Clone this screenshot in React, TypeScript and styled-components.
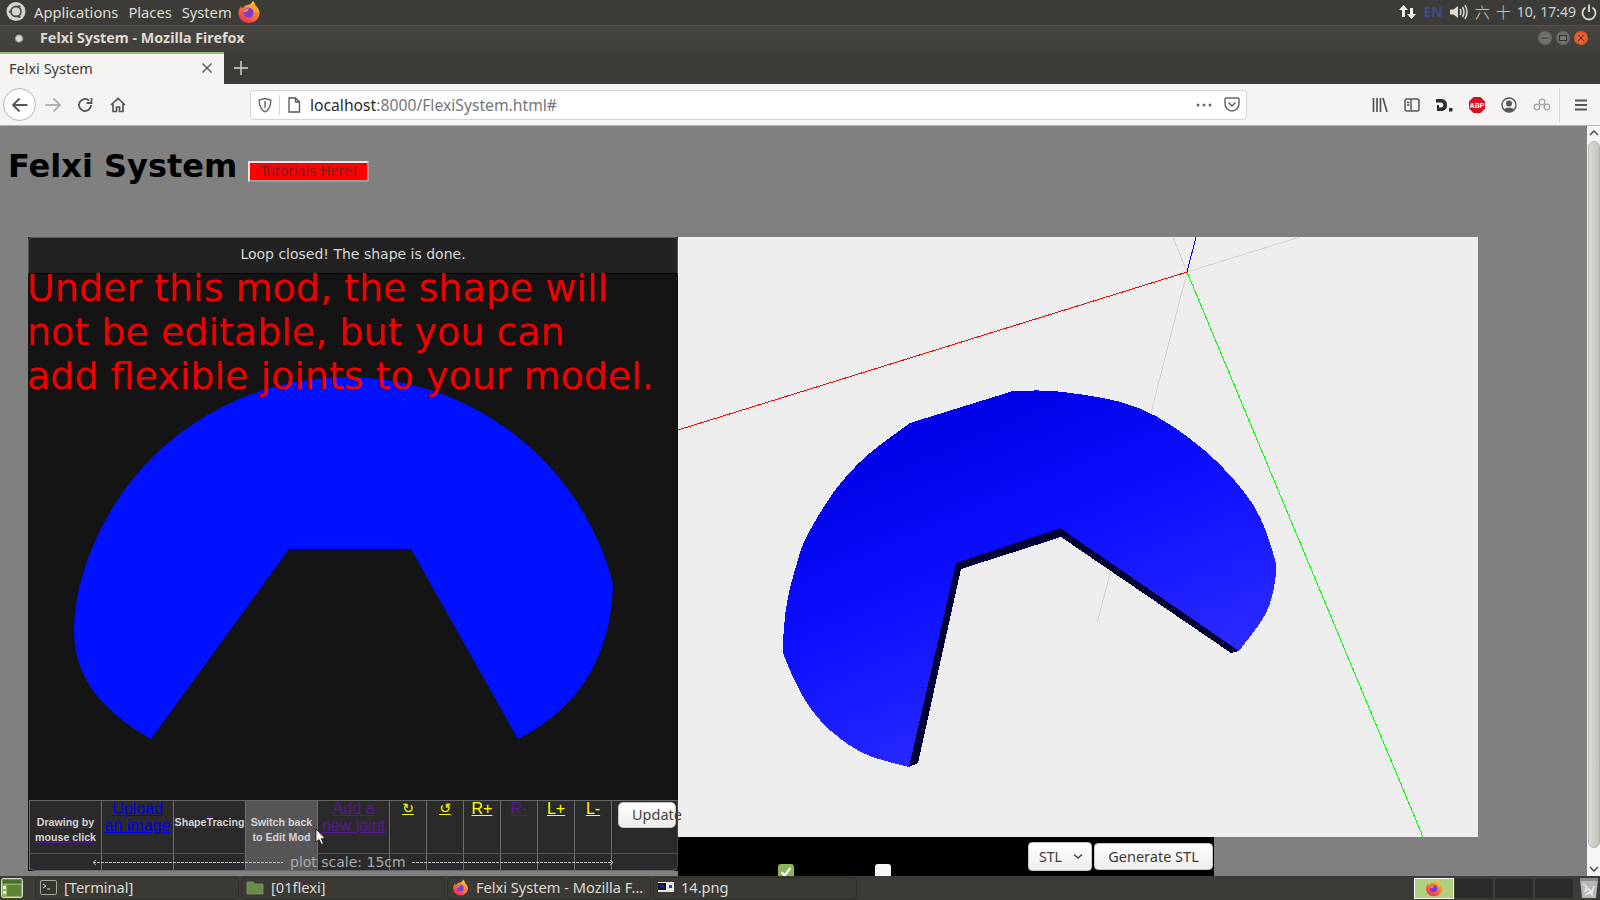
import React from 'react';
import styled, { createGlobalStyle } from 'styled-components';

const UI_FONT = '"Noto Sans", "Open Sans", sans-serif';
const PAGE_FONT = '"DejaVu Sans", sans-serif';

const GlobalStyle = createGlobalStyle`
html, body {
  margin: 0;
  padding: 0;
  background: #3c3b37;
  overflow: hidden;
}
`;

/* desktop chrome */
const Desktop = styled.div`
    width: 1600px;
    height: 900px;
    display: flex;
    flex-direction: column;
    overflow: hidden;
    font-family: ${UI_FONT};
`;
const TopPanel = styled.div`
    height: 23px;
    flex: none;
    display: flex;
    align-items: center;
    background: #3c3b37;
    border-bottom: 1px solid #53524d;
    color: #dfdbd2;
    font-size: 14.7px;
    padding: 0 2px 2px 5px;
`;
const MenuLabel = styled.span`
    margin-right: 10px;
    white-space: nowrap;
`;
const MenuLogo = styled.div`
    width: 23px;
    height: 23px;
    margin-right: 6px;
    display: flex;
`;
const BrowserLauncher = styled.div`
    margin-left: -5px;
    display: flex;
`;
const Tray = styled.div`
    margin-left: auto;
    display: flex;
    align-items: center;
    color: #c6d3dc;
    font-size: 14px;
    white-space: nowrap;
`;
const TrayEn = styled.span`
    color: #3c4c8f;
    font-weight: 700;
    margin: 0 6px 0 7px;
    font-size: 14px;
`;
const TrayCjk = styled.span<{ $left: number; $right: number }>`
    font-family: 'Noto Sans CJK SC', sans-serif;
    font-weight: 300;
    font-size: 15px;
    margin: 0 ${(p) => p.$right}px 0 ${(p) => p.$left}px;
`;
const TitleBar = styled.div`
    height: 26px;
    flex: none;
    box-sizing: border-box;
    display: flex;
    align-items: center;
    background: linear-gradient(#474641, #3f3e3a);
    color: #dfdbd2;
    font-size: 14.3px;
    font-weight: 700;
    padding: 0 10px 3px 14px;
`;
const TitleDot = styled.div`
    width: 10px;
    height: 10px;
    margin-right: 16px;
    border-radius: 50%;
    background: radial-gradient(circle at 50% 55%, #d8d8d4 0 35%, #222 70%, #3c3b37 100%);
`;
const WindowButtons = styled.div`
    margin-left: auto;
    display: flex;
    gap: 4px;
    margin-right: 2px;
`;
const WindowButton = styled.div<{ $close?: boolean }>`
    width: 14px;
    height: 14px;
    border-radius: 50%;
    background: ${(p) => (p.$close ? 'radial-gradient(circle, #f0703c, #d9491c)' : 'radial-gradient(circle, #7d7c76, #5e5d58)')};
    display: flex;
    align-items: center;
    justify-content: center;
`;
const TabStrip = styled.div`
    height: 32px;
    flex: none;
    display: flex;
    background: #3c3b37;
`;
const Tab = styled.div`
    width: 224px;
    box-sizing: border-box;
    border-top: 2px solid #9ab87c;
    background: #f5f4f2;
    color: #3a3a3a;
    font-size: 14.5px;
    display: flex;
    align-items: center;
    justify-content: space-between;
    padding: 0 11px 2px 9px;
`;
const NewTab = styled.div`
    width: 33px;
    display: flex;
    align-items: center;
    justify-content: center;
`;
const NavBar = styled.div`
    height: 42px;
    flex: none;
    box-sizing: border-box;
    background: #f5f4f2;
    border-bottom: 1px solid #b8b7b3;
    display: flex;
    align-items: center;
    padding-left: 3px;
`;
const NavButton = styled.div<{ $ring?: boolean; $w?: number }>`
    width: ${(p) => p.$w ?? 32}px;
    height: 33px;
    flex: none;
    box-sizing: border-box;
    display: flex;
    align-items: center;
    justify-content: center;
    ${(p) => p.$ring && 'border: 1px solid #b4b3af; border-radius: 50%; background: #fff; width: 33px;'}
`;
const UrlBar = styled.div`
    width: 997px;
    height: 30px;
    margin-left: 116px;
    flex: none;
    box-sizing: border-box;
    background: #fff;
    border: 1px solid #d5d4d0;
    border-radius: 4px;
    display: flex;
    align-items: center;
    font-size: 15.7px;
    color: #2b2b2b;
    padding: 0 6px 0 7px;
`;
const UrlSeparator = styled.div`
    width: 1px;
    height: 20px;
    background: #d5d4d0;
    margin: 0 7px 0 7px;
`;
const UrlGap = styled.span`
    width: 9px;
    flex: none;
`;
const UrlRest = styled.span`
    color: #77767a;
`;
const UrlEnd = styled.div`
    margin-left: auto;
    display: flex;
    align-items: center;
    gap: 12px;
`;
const ToolIcons = styled.div`
    margin-left: 117px;
    display: flex;
    align-items: center;
`;
const ToolSeparator = styled.div`
    width: 1px;
    height: 34px;
    background: #d8d7d3;
    margin: 0 5px 0 1px;
`;

/* the page inside the browser */
const Viewport = styled.div`
    flex: 1;
    min-height: 0;
    display: flex;
    overflow: hidden;
    background: #808080;
`;
const PageBody = styled.div`
    flex: 1;
    min-width: 0;
    overflow: hidden;
    font-family: ${PAGE_FONT};
`;
const HeaderRow = styled.div`
    height: 111px;
    box-sizing: border-box;
    padding: 22px 0 0 8px;
    display: flex;
    align-items: flex-start;
`;
const PageTitle = styled.h1`
    margin: 0;
    color: #000;
    font-size: 32px;
    line-height: 37px;
    font-weight: 700;
`;
const TutorialsButton = styled.a`
    margin: 13px 0 0 11px;
    width: 121px;
    height: 21px;
    box-sizing: border-box;
    background: #ff0000;
    border: 2px solid;
    border-color: #e8e8e8 #9a9a9a #9a9a9a #e8e8e8;
    color: #7a2020;
    font-size: 13.33px;
    line-height: 17px;
    text-align: center;
    white-space: nowrap;
    overflow: hidden;
`;
const Workspace = styled.div`
    display: flex;
    align-items: flex-start;
    padding-left: 28px;
`;
const DrawPanel = styled.div`
    width: 650px;
    flex: none;
    position: relative;
    background: #141414;
`;
const PanelHeader = styled.div`
    height: 37px;
    box-sizing: border-box;
    background: #222;
    border: 1px solid #555;
    border-bottom-color: #000;
    border-radius: 4px 4px 0 0;
    color: #d8d8d8;
    font-size: 14px;
    line-height: 33px;
    text-align: center;
`;
const Stage = styled.div`
    height: 526px;
    position: relative;
    background: #141414;
`;
const DrawingSvg = styled.svg<{ $bg?: string }>`
    display: block;
    background: ${(p) => p.$bg ?? 'transparent'};
`;
const ModeNotice = styled.div`
    position: absolute;
    left: -1px;
    top: -8px;
    color: #f00000;
    font-size: 38px;
    line-height: 44px;
    white-space: nowrap;
`;
const ToolGrid = styled.div`
    height: 71px;
    box-sizing: border-box;
    margin-left: 1px;
    display: grid;
    grid-template-columns: repeat(5, 72px) repeat(6, 37px) 1fr;
    position: relative;
    background: #2a2a2a;
    border-top: 1px solid #666;
    border-bottom: 1px solid #666;
    border-right: 1px solid #444;
    border-radius: 0 0 6px 6px;
`;
const ToolCell = styled.div<{ $active?: boolean }>`
    box-sizing: border-box;
    border-left: 1px solid #707070;
    background: ${(p) => (p.$active ? '#565656' : 'transparent')};
    text-align: center;
    position: relative;
`;
const ToolLink = styled.a<{ $color: string }>`
    display: block;
    margin-top: -1px;
    color: ${(p) => p.$color};
    text-decoration: underline;
    font-family: 'Liberation Sans', Arial, sans-serif;
    font-size: 16px;
    line-height: 17px;
`;
const TextLink = styled.a<{ $plain?: boolean }>`
    display: block;
    color: #d4d4d4;
    text-decoration: ${(p) => (p.$plain ? 'none' : 'underline')};
    text-decoration-color: #551a8b;
    font-family: 'Liberation Sans', Arial, sans-serif;
    font-size: 10.67px;
    font-weight: 700;
    line-height: 15px;
    padding-top: 14px;
    white-space: nowrap;
`;
const Underscore = styled.span`
    position: absolute;
    left: 0;
    right: 0;
    top: 2px;
    color: #551a8b;
    font-size: 11px;
    line-height: 15px;
`;
const YellowLink = styled.a<{ $visited?: boolean; $glyph?: boolean }>`
    display: block;
    margin-top: -2px;
    color: ${(p) => (p.$visited ? '#551a8b' : '#ffff00')};
    text-decoration: underline;
    font-family: ${(p) => (p.$glyph ? PAGE_FONT : "'Liberation Sans', Arial, sans-serif")};
    font-size: ${(p) => (p.$glyph ? 14 : 16)}px;
    line-height: 19px;
`;
const UpdateButton = styled.button`
    margin: 1px 0 0 6px;
    width: 58px;
    height: 26px;
    box-sizing: border-box;
    display: block;
    background: linear-gradient(#fff, #efedea);
    border: 1px solid #c8c6c0;
    border-radius: 5px;
    color: #444;
    font-family: ${UI_FONT};
    font-size: 14.5px;
    text-align: left;
    padding: 0 0 2px 13px;
    white-space: nowrap;
    overflow: visible;
`;
const ScaleBar = styled.div`
    position: absolute;
    left: 0;
    right: 0;
    bottom: 0;
    height: 17px;
    box-sizing: border-box;
    border-top: 1px solid #555;
    display: flex;
    align-items: center;
    color: #aaa;
    font-size: 14px;
    padding-left: 63px;
    white-space: nowrap;
`;
const ScaleText = styled.span`
    margin: 0 6px 0 7px;
`;
const ScaleArrow = styled.svg`
    display: block;
    flex: none;
`;
const CursorSvg = styled.svg`
    position: absolute;
    left: -3px;
    top: 27px;
`;
const ViewColumn = styled.div`
    width: 800px;
    flex: none;
`;
const ExportBar = styled.div`
    width: 536px;
    height: 60px;
    box-sizing: border-box;
    background: #000;
    display: flex;
    align-items: flex-start;
    padding: 5px 0 0 100px;
`;
const Tick = styled.div<{ $checked?: boolean; $gap: number }>`
    width: 16px;
    height: 16px;
    flex: none;
    margin: 22px ${(p) => p.$gap}px 0 0;
    border-radius: 3px;
    background: ${(p) => (p.$checked ? '#8ab35a' : '#f6f6f4')};
    display: flex;
    align-items: center;
    justify-content: center;
`;
const FormatSelect = styled.div`
    width: 64px;
    height: 29px;
    flex: none;
    box-sizing: border-box;
    background: linear-gradient(#fff, #efedea);
    border: 1px solid #c8c6c0;
    border-radius: 4px;
    color: #3a3a3a;
    font-family: ${UI_FONT};
    font-size: 14px;
    display: flex;
    align-items: center;
    justify-content: space-between;
    padding: 0 8px 0 10px;
`;
const GenerateButton = styled.div`
    width: 119px;
    height: 27px;
    flex: none;
    margin: 1px 0 0 2px;
    box-sizing: border-box;
    background: linear-gradient(#fff, #efedea);
    border: 1px solid #c8c6c0;
    border-radius: 4px;
    color: #3a3a3a;
    font-family: ${UI_FONT};
    font-size: 14.5px;
    line-height: 25px;
    text-align: center;
`;
const Scrollbar = styled.div`
    width: 13px;
    flex: none;
    background: #f6f5f3;
    display: flex;
    flex-direction: column;
    align-items: center;
    padding: 4px 0;
    box-sizing: border-box;
`;
const ScrollThumb = styled.div`
    flex: 1;
    width: 12px;
    margin: 5px 0 18px;
    background: linear-gradient(90deg, #dcdad6, #c4c2bd);
    border-radius: 6px;
    border: 1px solid #b5b3ae;
    box-sizing: border-box;
`;

/* bottom panel */
const BottomPanel = styled.div`
    height: 24px;
    flex: none;
    box-sizing: border-box;
    display: flex;
    align-items: center;
    background: #3c3b37;
    color: #dfdbd2;
    font-size: 14.6px;
    padding-left: 1px;
`;
const StartButton = styled.div`
    width: 22px;
    height: 20px;
    margin-right: 12px;
    display: flex;
`;
const TaskList = styled.div`
    display: flex;
    gap: 2px;
`;
const TaskButton = styled.div`
    width: 204px;
    height: 23px;
    box-sizing: border-box;
    background: #3a3934;
    border: 1px solid #2f2e2a;
    border-radius: 4px;
    display: flex;
    align-items: center;
    gap: 7px;
    padding: 0 0 2px 4px;
    white-space: nowrap;
    overflow: hidden;
`;
const WorkspaceSwitcher = styled.div`
    margin-left: auto;
    display: flex;
    align-items: center;
    height: 21px;
`;
const WorkspaceCell = styled.div<{ $active?: boolean; $w: number }>`
    width: ${(p) => p.$w}px;
    height: 21px;
    box-sizing: border-box;
    background: ${(p) => (p.$active ? '#aed080' : '#2b2b29')};
    border: 1px solid ${(p) => (p.$active ? '#fff' : '#3c3b37')};
    display: flex;
    align-items: center;
    justify-content: center;
`;
const TrashBox = styled.div`
    width: 23px;
    margin-left: 3px;
    display: flex;
    justify-content: center;
`;

// catmull-rom through the sampled outline points
const smooth = (pts: number[][]) => {
    let d = `M${pts[0][0]} ${pts[0][1]}`;
    for (let i = 0; i < pts.length - 1; i++) {
        const p0 = pts[Math.max(i - 1, 0)];
        const p1 = pts[i];
        const p2 = pts[i + 1];
        const p3 = pts[Math.min(i + 2, pts.length - 1)];
        const c1 = [p1[0] + (p2[0] - p0[0]) / 6, p1[1] + (p2[1] - p0[1]) / 6];
        const c2 = [p2[0] - (p3[0] - p1[0]) / 6, p2[1] - (p3[1] - p1[1]) / 6];
        d += ` C${c1[0]} ${c1[1]} ${c2[0]} ${c2[1]} ${p2[0]} ${p2[1]}`;
    }
    return d;
};

const FLAT_PATH = 'M151 739 C105 713 74 680 74 630 C74 617 76 605 78 593 A275 275 0 0 1 613 584 C611 650 585 705 518 739 L411 549 L289 549 Z';

const SOLID_LOWER = [[909, 767], [870, 756], [842, 740], [820, 720], [805, 700], [793, 677], [783, 653]];
const SOLID_UPPER = [[783, 653], [784, 627], [788, 597], [797, 563], [805, 540], [825, 505], [845, 478], [870, 453], [910, 423]];
const SOLID_RIGHT = [[1013, 391], [1063, 392], [1139, 408], [1204, 450], [1252, 503], [1273, 553], [1275.5, 577], [1266, 613], [1239, 651]];
const SOLID_OUTLINE = `${smooth(SOLID_LOWER)} ${smooth(SOLID_UPPER).replace('M', 'L')} ${smooth(SOLID_RIGHT).replace('M', 'L')} L1060 528 L956 563 Z`;

const FirefoxIcon = ({ size }: { size: number }) => (
    <svg width={size} height={size} viewBox="0 0 24 24">
        <defs>
            <linearGradient id="ffBody" x1="0.8" y1="0" x2="0.2" y2="1">
                <stop offset="0" stopColor="#ffd43a" />
                <stop offset="0.45" stopColor="#ff7b2c" />
                <stop offset="1" stopColor="#f0265f" />
            </linearGradient>
        </defs>
        <path d="M12 23C5.8 23 1.5 18.3 1.5 13c0-2.6 1-5 2.6-6.7C4.5 7.500 5 8 5.800 8.300 7 5.500 10 5 11.500 4.800 13 4.500 15 3.200 16 .8c1.800 2 2.200 3.500 2.300 4.700C21 7.500 22.500 10 22.500 13 22.500 18.500 18 23 12 23Z" fill="url(#ffBody)" />
        <circle cx="11.500" cy="12.800" r="5" fill="#7a3fd0" />
        <path d="M6.500 12.500C7 9.500 9.500 8 12.500 8.500 11 9.500 10.500 10.500 10.500 11.500 8.800 11.500 7.500 11.800 6.500 12.500Z" fill="#ff9a2c" />
    </svg>
);

const Glyph = ({ w = 18, h = 18, children }: { w?: number; h?: number; children: React.ReactNode }) => (
    <svg width={w} height={h} viewBox={`0 0 ${w} ${h}`} fill="none">
        {children}
    </svg>
);

const Cursor = () => (
    <CursorSvg width="12" height="18" viewBox="0 0 12 18">
        <path d="M1 1 L1 14 L4 11.500 L6.500 16.500 L8.500 15.500 L6.200 10.800 L10 10.500 Z" fill="#fff" stroke="#111" strokeWidth="0.8" />
    </CursorSvg>
);

export default function App() {
    return (
        <Desktop>
            <GlobalStyle />
            <TopPanel>
                <MenuLogo>
                    <svg width="23" height="23" viewBox="0 0 23 23">
                        <circle cx="11" cy="11.500" r="9.500" fill="#d8d5cc" />
                        <circle cx="11" cy="11.500" r="5" fill="none" stroke="#55534d" strokeWidth="1.800" />
                        <circle cx="5.500" cy="11.500" r="1.600" fill="#55534d" />
                        <circle cx="14" cy="6.500" r="1.600" fill="#55534d" />
                        <circle cx="14" cy="16.500" r="1.600" fill="#55534d" />
                    </svg>
                </MenuLogo>
                <MenuLabel>Applications</MenuLabel>
                <MenuLabel>Places</MenuLabel>
                <MenuLabel>System</MenuLabel>
                <BrowserLauncher>
                    <FirefoxIcon size={24} />
                </BrowserLauncher>
                <Tray>
                    <Glyph w={19} h={18}>
                        <path d="M5.500 2 L10 7 H7 V14 H4 V7 H1 Z M13.500 16 L9 11 H12 V5 H15 V11 H18 Z" fill="#eeeeea" />
                    </Glyph>
                    <TrayEn>EN</TrayEn>
                    <Glyph w={20} h={18}>
                        <path d="M1 6.500 H4.500 L9 3 V15 L4.500 11.500 H1 Z" fill="#dfdbd2" />
                        <path d="M11 6 Q13 9 11 12 M13.500 4 Q16.500 9 13.500 14 M16 2 Q20 9 16 16" stroke="#dfdbd2" strokeWidth="1.500" />
                    </Glyph>
                    <TrayCjk $left={6} $right={3}>六</TrayCjk>
                    <TrayCjk $left={3} $right={6}>十</TrayCjk>
                    <span>10, 17:49</span>
                    <Glyph w={22} h={18}>
                        <path d="M9.500 4.500 A6.500 6.500 0 1 0 16.500 4.500 M13 1.500 V9" stroke="#dfdbd2" strokeWidth="1.800" />
                    </Glyph>
                </Tray>
            </TopPanel>
            <TitleBar>
                <TitleDot />
                Felxi System - Mozilla Firefox
                <WindowButtons>
                    <WindowButton>
                        <Glyph w={10} h={10}><path d="M1.500 5 H8.500" stroke="#333" strokeWidth="1" /></Glyph>
                    </WindowButton>
                    <WindowButton>
                        <Glyph w={10} h={10}><rect x="1.500" y="2.500" width="7" height="5" stroke="#333" strokeWidth="1" /></Glyph>
                    </WindowButton>
                    <WindowButton $close>
                        <Glyph w={10} h={10}><path d="M2 2 L8 8 M8 2 L2 8" stroke="#4a1a08" strokeWidth="1" /></Glyph>
                    </WindowButton>
                </WindowButtons>
            </TitleBar>
            <TabStrip>
                <Tab>
                    Felxi System
                    <Glyph w={12} h={12}><path d="M1.500 1.500 L10.500 10.500 M10.500 1.500 L1.500 10.500" stroke="#555" strokeWidth="1.400" /></Glyph>
                </Tab>
                <NewTab>
                    <Glyph w={14} h={14}><path d="M7 0 V14 M0 7 H14" stroke="#d8d7d3" strokeWidth="1.400" /></Glyph>
                </NewTab>
            </TabStrip>
            <NavBar>
                <NavButton $ring>
                    <Glyph w={18} h={16}><path d="M16.500 8 H2 M8.500 1.500 L2 8 L8.500 14.500" stroke="#555" strokeWidth="1.800" /></Glyph>
                </NavButton>
                <NavButton $w={33}>
                    <Glyph w={18} h={16}><path d="M1.500 8 H16 M9.500 1.500 L16 8 L9.500 14.500" stroke="#b2b2b0" strokeWidth="1.800" /></Glyph>
                </NavButton>
                <NavButton $w={32}>
                    <Glyph w={16} h={16}><path d="M14 8 A6 6 0 1 1 12 3.500 M14.500 1 V6 H9.500" stroke="#555" strokeWidth="1.800" /></Glyph>
                </NavButton>
                <NavButton $w={33}>
                    <Glyph w={16} h={16}><path d="M1 8 L8 1.500 L15 8 M3 7 V14.500 H6.500 V10 H9.500 V14.500 H13 V7" stroke="#555" strokeWidth="1.700" /></Glyph>
                </NavButton>
                <UrlBar>
                    <Glyph w={14} h={16}><path d="M7 1.500 L12.800 3 C12.800 9 11 13 7 14.800 3 13 1.200 9 1.200 3 Z M7 4 V11" stroke="#666" strokeWidth="1.400" /></Glyph>
                    <UrlSeparator />
                    <Glyph w={14} h={16}><path d="M2 1 H8.500 L12.500 5 V15 H2 Z M8.500 1 V5 H12.500" stroke="#555" strokeWidth="1.300" /></Glyph>
                    <UrlGap />
                    localhost<UrlRest>:8000/FlexiSystem.html#</UrlRest>
                    <UrlEnd>
                        <Glyph w={16} h={4}><g fill="#666"><circle cx="2" cy="2" r="1.500" /><circle cx="8" cy="2" r="1.500" /><circle cx="14" cy="2" r="1.500" /></g></Glyph>
                        <Glyph w={16} h={15}><path d="M1 2 Q1 1 2 1 H14 Q15 1 15 2 V6.500 C15 10.500 12 14 8 14 4 14 1 10.500 1 6.500 Z M4.500 5.500 L8 9 L11.500 5.500" stroke="#666" strokeWidth="1.500" /></Glyph>
                    </UrlEnd>
                </UrlBar>
                <ToolIcons>
                    <NavButton $w={32}>
                        <Glyph w={16} h={16}><path d="M1.500 1 V15 M5 1 V15 M8.500 1 V15 M11 1 L15 15" stroke="#555" strokeWidth="1.700" /></Glyph>
                    </NavButton>
                    <NavButton $w={32}>
                        <Glyph w={16} h={14}><rect x="1" y="1" width="14" height="12" rx="2" stroke="#555" strokeWidth="1.500" /><path d="M7 1 V13 M3 4.500 H5.500 M3 7 H5.500" stroke="#555" strokeWidth="1.400" /></Glyph>
                    </NavButton>
                    <NavButton $w={33}>
                        <Glyph w={17} h={14}><path d="M0 1 H5 C9 1 11 3.500 11 7 C11 10.500 9 13 5 13 H3 V9.500 H5 C6.500 9.500 7.300 8.500 7.300 7 C7.300 5.500 6.500 4.500 5 4.500 H0 Z M1 7 H3 V13 H1 Z" fill="#2e2e2e" /><rect x="13" y="10" width="3.500" height="3.500" fill="#2e2e2e" /></Glyph>
                    </NavButton>
                    <NavButton $w={32}>
                        <svg width="18" height="18" viewBox="0 0 18 18">
                            <path d="M5.500 1 H12.500 L17 5.500 V12.500 L12.500 17 H5.500 L1 12.500 V5.500 Z" fill="#d50f1e" />
                            <text x="9" y="11.500" textAnchor="middle" fontFamily="'Liberation Sans', sans-serif" fontWeight="700" fontSize="7" fill="#fff">ABP</text>
                        </svg>
                    </NavButton>
                    <NavButton $w={32}>
                        <Glyph w={16} h={16}><circle cx="8" cy="8" r="7" stroke="#555" strokeWidth="1.400" /><circle cx="8" cy="6.500" r="3" fill="#555" /><path d="M3 12.500 C4 10 12 10 13 12.500 L11 14.500 H5 Z" fill="#555" /></Glyph>
                    </NavButton>
                    <NavButton $w={33}>
                        <Glyph w={18} h={14}><g stroke="#a5a5a3" strokeWidth="1.300"><circle cx="4" cy="9" r="2.800" /><circle cx="9" cy="4" r="2.800" /><circle cx="14" cy="9" r="2.800" /></g></Glyph>
                    </NavButton>
                    <ToolSeparator />
                    <NavButton $w={32}>
                        <Glyph w={14} h={12}><path d="M1 1.500 H13 M1 6 H13 M1 10.500 H13" stroke="#555" strokeWidth="1.800" /></Glyph>
                    </NavButton>
                </ToolIcons>
            </NavBar>
            <Viewport>
                <PageBody>
                    <HeaderRow>
                        <PageTitle>Felxi System</PageTitle>
                        <TutorialsButton>Tutorials Here!</TutorialsButton>
                    </HeaderRow>
                    <Workspace>
                        <DrawPanel>
                            <PanelHeader>Loop closed! The shape is done.</PanelHeader>
                            <Stage>
                                <DrawingSvg width="650" height="526" viewBox="28 274 650 526">
                                    <path d={FLAT_PATH} fill="#0011ff" />
                                </DrawingSvg>
                                <ModeNotice>
                                    Under this mod, the shape will
                                    <br />
                                    not be editable, but you can
                                    <br />
                                    add flexible joints to your model.
                                </ModeNotice>
                            </Stage>
                            <ToolGrid>
                                <ToolCell>
                                    <Underscore>_</Underscore>
                                    <TextLink>Drawing by<br />mouse click</TextLink>
                                </ToolCell>
                                <ToolCell>
                                    <ToolLink $color="#0000ee">Upload<br />an image</ToolLink>
                                </ToolCell>
                                <ToolCell>
                                    <Underscore>_</Underscore>
                                    <TextLink>ShapeTracing</TextLink>
                                </ToolCell>
                                <ToolCell $active>
                                    <TextLink $plain>Switch back<br />to Edit Mod</TextLink>
                                </ToolCell>
                                <ToolCell>
                                    <Cursor />
                                    <ToolLink $color="#551a8b">Add a<br />new joint</ToolLink>
                                </ToolCell>
                                <ToolCell><YellowLink $glyph>↻</YellowLink></ToolCell>
                                <ToolCell><YellowLink $glyph>↺</YellowLink></ToolCell>
                                <ToolCell><YellowLink>R+</YellowLink></ToolCell>
                                <ToolCell><YellowLink $visited>R-</YellowLink></ToolCell>
                                <ToolCell><YellowLink>L+</YellowLink></ToolCell>
                                <ToolCell><YellowLink>L-</YellowLink></ToolCell>
                                <ToolCell>
                                    <UpdateButton>Update</UpdateButton>
                                </ToolCell>
                                <ScaleBar>
                                    <ScaleArrow width="191" height="7" viewBox="0 0 191 7">
                                        <path d="M4 1 L1 3.500 L4 6" stroke="#b8b8b8" fill="none" strokeWidth="1" />
                                        <path d="M1 3.500 H191" stroke="#b8b8b8" fill="none" strokeDasharray="3 1" strokeWidth="1" />
                                    </ScaleArrow>
                                    <ScaleText>plot scale: 15cm</ScaleText>
                                    <ScaleArrow width="202" height="7" viewBox="0 0 202 7">
                                        <path d="M0 3.500 H201" stroke="#b8b8b8" fill="none" strokeDasharray="3 1" strokeWidth="1" />
                                        <path d="M198 1 L201 3.500 L198 6" stroke="#b8b8b8" fill="none" strokeWidth="1" />
                                    </ScaleArrow>
                                </ScaleBar>
                            </ToolGrid>
                        </DrawPanel>
                        <ViewColumn>
                            <DrawingSvg $bg="#eeeeee" width="800" height="600" viewBox="678 237 800 600">
                                <defs>
                                    <linearGradient id="solidFace" gradientUnits="userSpaceOnUse" x1="980" y1="390" x2="1110" y2="700">
                                        <stop offset="0" stopColor="#0000e6" />
                                        <stop offset="0.5" stopColor="#0c10ff" />
                                        <stop offset="1" stopColor="#2a2aff" />
                                    </linearGradient>
                                </defs>
                                <g shapeRendering="crispEdges" strokeWidth="1" fill="none">
                                    <path d="M1187 272 L1173 237 M1187 272 L1300 237 M1187 272 L1097.500 622" stroke="#d4d4d4" />
                                    <path d="M678 430 L1187 272" stroke="#ff0000" />
                                    <path d="M1187 272 L1196 237" stroke="#0000ff" />
                                    <path d="M1187 272 L1423 837" stroke="#00ff00" />
                                </g>
                                <g shapeRendering="crispEdges">
                                    <path d="M909 767 L918 763 L961 569 L1061 537 L1231 653 L1239 651 L1060 528 L956 563 Z" fill="#000033" />
                                    <path d={SOLID_OUTLINE} fill="url(#solidFace)" />
                                </g>
                            </DrawingSvg>
                            <ExportBar>
                                <Tick $checked $gap={81}>
                                    <Glyph w={12} h={12}><path d="M1.500 6 L4.500 9.500 L10.500 2" stroke="#fff" strokeWidth="2.200" /></Glyph>
                                </Tick>
                                <Tick $gap={137} />
                                <FormatSelect>
                                    STL
                                    <Glyph w={10} h={7}><path d="M1 1.500 L5 5 L9 1.500" stroke="#444" strokeWidth="1.500" /></Glyph>
                                </FormatSelect>
                                <GenerateButton>Generate STL</GenerateButton>
                            </ExportBar>
                        </ViewColumn>
                    </Workspace>
                </PageBody>
                <Scrollbar>
                    <Glyph w={10} h={6}><path d="M1 5 L5 1 L9 5" stroke="#444" strokeWidth="1.400" /></Glyph>
                    <ScrollThumb />
                    <Glyph w={10} h={6}><path d="M1 1 L5 5 L9 1" stroke="#444" strokeWidth="1.400" /></Glyph>
                </Scrollbar>
            </Viewport>
            <BottomPanel>
                <StartButton>
                    <svg width="22" height="20" viewBox="0 0 22 20">
                        <rect x="0.500" y="0.500" width="21" height="19" rx="2" fill="#8bb45a" stroke="#dfdbd2" />
                        <rect x="1.500" y="1.500" width="19" height="4" fill="#4d6b30" />
                        <rect x="2" y="8" width="3" height="3" fill="#f2f2ee" />
                        <rect x="2" y="13" width="3" height="3" fill="#f2f2ee" />
                        <rect x="6" y="7" width="14" height="11" fill="#5e8436" />
                    </svg>
                </StartButton>
                <TaskList>
                    <TaskButton>
                        <Glyph w={17} h={15}>
                            <rect x="0.500" y="0.500" width="16" height="14" rx="1.500" fill="#36352f" stroke="#a8a69f" />
                            <path d="M3 4 L6 6 L3 8 M7 9 H10" stroke="#dfdbd2" />
                        </Glyph>
                        <span>[Terminal]</span>
                    </TaskButton>
                    <TaskButton>
                        <Glyph w={18} h={15}>
                            <path d="M1 2 H7 L8.500 4 H17 V14 H1 Z" fill="#6a8a48" stroke="#8c8b84" strokeWidth="0.800" />
                        </Glyph>
                        <span>[01flexi]</span>
                    </TaskButton>
                    <TaskButton>
                        <FirefoxIcon size={17} />
                        <span>Felxi System - Mozilla F...</span>
                    </TaskButton>
                    <TaskButton>
                        <Glyph w={16} h={10}>
                            <rect width="16" height="10" fill="#e8e8e8" />
                            <rect x="0" y="1" width="8" height="7" fill="#141414" />
                            <rect x="2" y="3" width="4" height="3" fill="#0011ff" />
                            <rect x="11" y="3" width="3" height="3" fill="#2a2aff" />
                        </Glyph>
                        <span>14.png</span>
                    </TaskButton>
                </TaskList>
                <WorkspaceSwitcher>
                    <WorkspaceCell $active $w={40}>
                        <FirefoxIcon size={18} />
                    </WorkspaceCell>
                    <WorkspaceCell $w={40} />
                    <WorkspaceCell $w={40} />
                    <WorkspaceCell $w={40} />
                </WorkspaceSwitcher>
                <TrashBox>
                    <svg width="20" height="22" viewBox="0 0 20 22">
                        <path d="M1 2 H19 L17 21 H3 Z" fill="#b7b7b3" />
                        <rect x="1" y="1" width="18" height="3" fill="#8b8b87" />
                        <path d="M4 7 L8 10 L6 14 L10 12 L13 16 L15 9 M6 18 L11 15 L14 19" stroke="#e8e8e6" strokeWidth="1.500" fill="none" />
                    </svg>
                </TrashBox>
            </BottomPanel>
        </Desktop>
    );
}
